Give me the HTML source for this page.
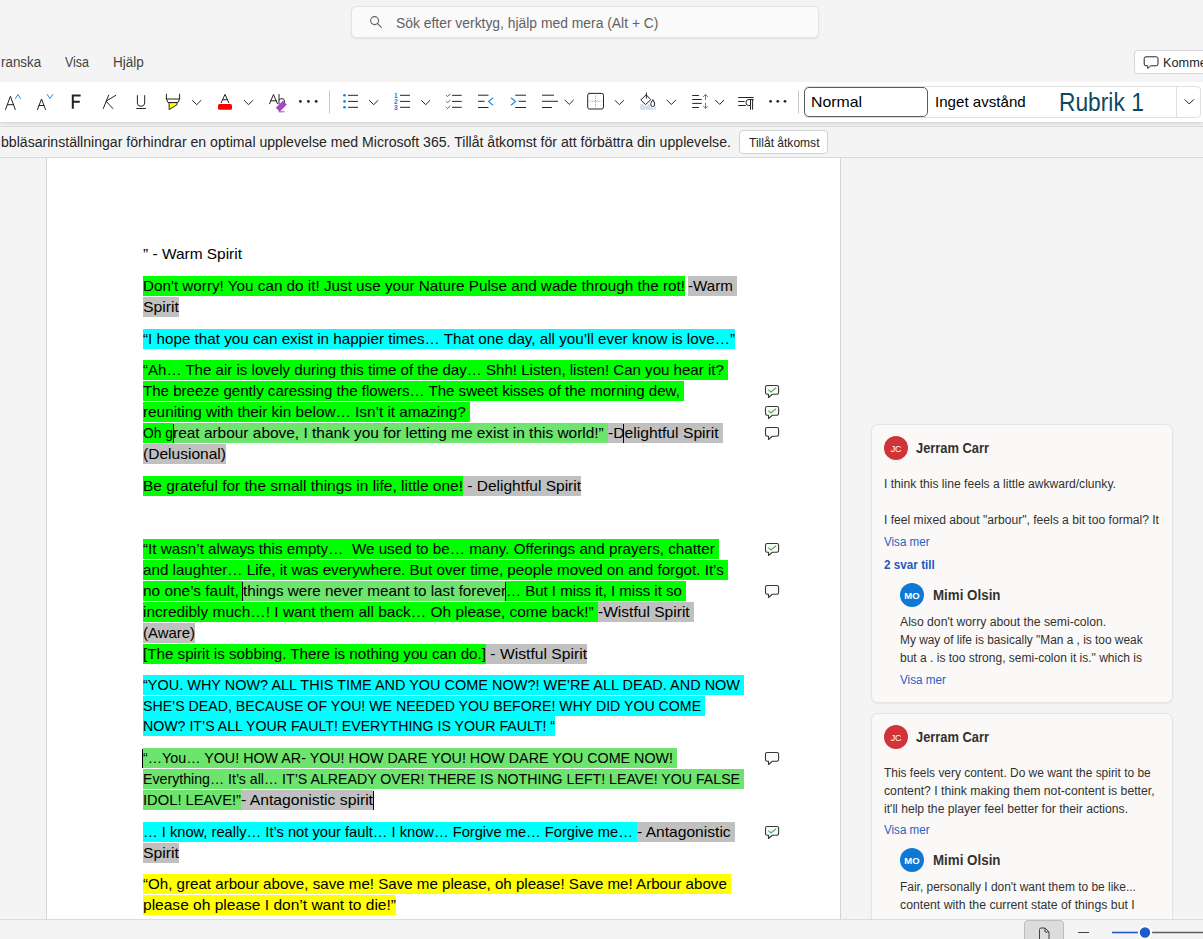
<!DOCTYPE html>
<html><head><meta charset="utf-8">
<style>
*{margin:0;padding:0;box-sizing:border-box}
html,body{width:1203px;height:939px;overflow:hidden;background:#f4f4f4;font-family:"Liberation Sans",sans-serif;color:#242424;position:relative}
.a{position:absolute;white-space:nowrap}
svg{position:absolute;overflow:visible}
#search{left:351px;top:6px;width:468px;height:32px;background:#fafafa;border:1px solid #e3e3e3;border-radius:5px;box-shadow:0 1px 2px rgba(0,0,0,.08)}
.menu{font-size:14px;color:#424242;top:53px}
#ribbon{left:0;top:82px;width:1203px;height:40px;background:#fff;box-shadow:0 2px 3px rgba(0,0,0,.12)}
#rline{left:0;top:126px;width:1203px;height:1px;background:#d9d9d9}
#infobar{left:0;top:127px;width:1203px;height:30px;background:#f4f4f4}
#iline{left:0;top:157px;width:1203px;height:1px;background:#d9d9d9}
#page{left:46px;top:158px;width:795px;height:761px;background:#fff;border-left:1px solid #d4d4d4;border-right:1px solid #d4d4d4}
#status{left:0;top:919px;width:1203px;height:20px;background:#f4f4f4;border-top:1px solid #dcdcdc}
.d{height:20px;line-height:20px;font-size:15px;color:#000}
.d span,.t{display:inline-block;transform-origin:0 0;white-space:pre}
.g{background:#00ff00}
.c{background:#00ffff}
.y{background:#ffff00}
.s{background:#c0c0c0}
.lg{background:#6de46d}
.card{background:#faf9f8;border:1px solid #e6e4e2;border-radius:7px;box-shadow:0 1px 2px rgba(0,0,0,.06)}
.cm{font-size:12px;color:#323130}
.name{font-size:14px;font-weight:bold;color:#323130}
.link{font-size:12px;color:#2b61c6}
.av{width:24px;height:24px;border-radius:12px;color:#fff;font-size:10px;text-align:center;line-height:24px}
</style></head><body>
<div class="a" id="search"></div>
<div class="a" id="ribbon"></div>

<!-- ribbon icons -->
<svg style="left:0;top:82px" width="1203" height="40" viewBox="0 82 1203 40" fill="none" stroke="#242424" stroke-width="1" stroke-linecap="round" stroke-linejoin="round">
 <!-- A^ -->
 <path d="M5.5 109.5 L10.4 96.3 L15.3 109.5 M7.3 104.7 H13.5"/>
 <path d="M15.5 98.5 L18 94.5 L20.5 98.5" stroke="#2b88d8"/>
 <!-- A v -->
 <path d="M37.5 109.5 L41.5 99 L45.5 109.5 M39 105.5 H44"/>
 <path d="M47.3 94.5 L50 98.5 L52.7 94.5" stroke="#2b88d8"/>
 <!-- F -->
 <path d="M72.8 108.8 V95.6 H80.6 M72.8 101.8 H79.8" stroke-width="2" stroke-linecap="butt" stroke-linejoin="miter"/>
 <!-- K italic -->
 <path d="M108.7 95.2 L103.3 108.5 M115.8 95.3 L106 101.2 L112.9 108.5"/>
 <!-- U -->
 <path d="M137.4 95.2 V103 Q137.4 106.3 141 106.3 Q144.7 106.3 144.7 103 V95.2 M136.3 108.5 H145.8" stroke-linecap="butt"/>
 <!-- highlighter -->
 <path d="M169.5 102.6 H177 V104.7 L169.5 109.5 Z" fill="#ffff00" stroke="#242424"/>
 <path d="M166.4 94.2 V99 H179.6 V94.2 M166.4 99 L168 102.5 H178 L179.6 99"/>
 <!-- chevrons -->
 <path d="M192.5 100.5 L196.7 104.7 L200.9 100.5 M244.3 100.5 L248.5 104.7 L252.7 100.5 M369.5 100.5 L373.7 104.7 L377.9 100.5 M421.5 100.5 L425.7 104.7 L429.9 100.5 M565 100.2 L569.2 104.4 L573.4 100.2 M615.2 100.5 L619.4 104.7 L623.6 100.5 M667 100.2 L671.3 104.5 L675.6 100.2 M715.5 100.2 L719.7 104.4 L723.9 100.2"/>
 <!-- font color A -->
 <path d="M221.2 102.8 L225 94.3 L228.8 102.8 M222.6 99.7 H227.4"/>
 <rect x="218" y="104" width="14" height="5.8" rx="1.5" fill="#ff0000" stroke="none"/>
 <!-- Ab eraser -->
 <path d="M269.5 103.8 L273.5 94.5 L277.5 103.8 M270.8 100.8 H276.2 M279 94.5 V103.8 M279 99.8 Q280 98.6 282 98.6 Q284.5 98.6 284.5 101.2 V103"/>
 <path d="M286.8 104.6 L282.9 100.7 L275.8 107.8 L279.7 111.7 Z" fill="#a347c4" stroke="none"/>
 <path d="M278.5 111.8 H284.5" stroke="#a347c4" stroke-linecap="butt"/>
 <!-- dots -->
 <g fill="#242424" stroke="none"><circle cx="300.4" cy="101.4" r="1.4"/><circle cx="308.4" cy="101.4" r="1.4"/><circle cx="316.2" cy="101.4" r="1.4"/>
 <circle cx="770.6" cy="101.3" r="1.4"/><circle cx="777.8" cy="101.3" r="1.4"/><circle cx="785" cy="101.3" r="1.4"/></g>
 <!-- separators -->
 <path d="M329.5 90.5 V113.5 M798.5 90.5 V113.5" stroke="#c8c8c8" stroke-linecap="butt"/>
 <!-- bullets -->
 <g fill="#1a7fd4" stroke="none"><circle cx="344.5" cy="95.3" r="1.3"/><circle cx="344.5" cy="101.4" r="1.3"/><circle cx="344.5" cy="107.3" r="1.3"/></g>
 <path d="M348 95.3 H358 M348 101.4 H358 M348 107.3 H358 M400 95.3 H410 M400 101.4 H410 M400 107.3 H410 M452 95.3 H461.7 M452 101.4 H461.7 M452 107.3 H461.7" stroke-linecap="butt"/>
 <!-- numbers -->
 <g fill="#1a7fd4" stroke="none" font-family="Liberation Sans" font-weight="bold" font-size="6.6px"><text x="393.9" y="97.8">1</text><text x="393.9" y="103.7">2</text><text x="393.9" y="109.7">3</text></g>
 <!-- checks -->
 <path d="M446.2 95.3 L447.6 96.6 L450 94 M446.2 101.4 L447.6 102.7 L450 100.1 M446.2 107.3 L447.6 108.6 L450 106" stroke="#1a7fd4"/>
 <!-- decrease indent -->
 <path d="M478 95.2 H488.5 M478 101.3 H484.6 M478 107.5 H488.5" stroke-linecap="butt"/>
 <path d="M492.8 98 L488.6 101.5 L492.8 105" stroke="#2b88d8" stroke-width="1.1"/>
 <!-- increase indent -->
 <path d="M515.2 95.2 H526 M518.7 101.3 H526 M515.2 107.5 H526" stroke-linecap="butt"/>
 <path d="M511.2 98 L515.4 101.5 L511.2 105" stroke="#2b88d8" stroke-width="1.1"/>
 <!-- align -->
 <path d="M542 95.2 H554 M542 101.3 H558 M542 107.5 H552" stroke-linecap="butt"/>
 <!-- borders -->
 <rect x="587.7" y="93.4" width="15.8" height="15.6" rx="1.8"/>
 <path d="M595.6 95.5 V107 M589.8 101.2 H601.4" stroke="#888" stroke-dasharray="1 1.2" stroke-linecap="butt"/>
 <!-- shading -->
 <rect x="640.1" y="104.1" width="15.8" height="5.7" rx="1.2" fill="#d3def1" stroke="none"/>
 <path d="M646.4 95 L650.8 99.7 L645.5 104.6 L641.1 100.3 Z" fill="#fff" stroke="#fff" stroke-width="3"/>
 <path d="M646.4 95 L650.8 99.7 L645.5 104.6 L641.1 100.3 Z M646.4 93 V98.1"/>
 <path d="M652.7 100 L650.8 103.4 Q650.2 106.6 652.7 106.6 Q655.2 106.6 654.6 103.4 Z" fill="#fff" stroke="#fff" stroke-width="2.6"/>
 <path d="M652.7 100 L650.8 103.4 Q650.2 106.6 652.7 106.6 Q655.2 106.6 654.6 103.4 Z"/>
 <!-- line spacing -->
 <path d="M692.2 95.5 H698.9 M692.2 99.5 H701.7 M692.2 103.4 H701.7 M692.2 107.5 H698.9" stroke-linecap="butt"/>
 <path d="M705.5 94.5 V99.7 M703.4 96.6 L705.5 94.5 L707.6 96.6 M705.5 103.2 V108.3 M703.4 106.2 L705.5 108.3 L707.6 106.2" stroke="#2b88d8"/>
 <!-- paragraph mark -->
 <path d="M738.2 97.5 H753.7 M738.2 101.5 H744.6 M738.2 105.5 H745.8 M748.3 99.5 H753.7 M750.5 99.5 V109.7 M752.6 99.5 V109.7" stroke-linecap="butt"/>
 <path d="M750.5 99.5 H748.8 Q745.9 99.5 745.9 102.5 Q745.9 105.5 748.8 105.5 H750.5" stroke-linecap="butt"/>
</svg>
<!-- style gallery -->
<div class="a" style="left:804px;top:86px;width:397px;height:32px;border:1px solid #e0e0e0;border-radius:4px;background:#fff"></div>
<div class="a" style="left:1176px;top:87px;width:1px;height:30px;background:#e0e0e0"></div>
<div class="a" style="left:804px;top:87px;width:124px;height:30px;border:1.5px solid #5c5c5c;border-radius:5px;background:#fff"></div>
<svg style="left:0;top:0" width="1203" height="120" fill="none" stroke="#242424" stroke-width="1" stroke-linecap="round" stroke-linejoin="round">
 <path d="M1184.8 99.6 L1189.2 104 L1193.6 99.6"/>
</svg>
<!-- Kommentarer button -->
<div class="a" style="left:1134px;top:50px;width:90px;height:24px;background:#fff;border:1px solid #d6d6d6;border-radius:4px"></div>
<svg style="left:0;top:0" width="1203" height="120" fill="none" stroke="#242424" stroke-width="1" stroke-linejoin="round">
 <path d="M1146 56.8 H1156.2 Q1158 56.8 1158 58.6 V64 Q1158 65.8 1156.2 65.8 H1150.8 L1147.8 68.4 V65.8 H1146 Q1144.2 65.8 1144.2 64 V58.6 Q1144.2 56.8 1146 56.8Z"/>
</svg>
<!-- search icon -->
<svg style="left:0;top:0" width="1203" height="40" fill="none" stroke="#616161" stroke-width="1.1" stroke-linecap="round">
 <circle cx="374.6" cy="20.6" r="4"/><path d="M377.6 23.6 L381.3 27.3"/>
</svg>
<div class="a" id="rline"></div>
<div class="a" id="infobar"></div>
<div class="a" style="left:739px;top:130px;width:89px;height:24px;background:#fff;border:1px solid #d1d1d1;border-radius:4px"></div>
<div class="a" id="iline"></div>
<div class="a" id="page"></div>
<div class="a d" style="left:143px;top:244px;width:99px"><span style="transform:scaleX(1.0301)">” - Warm Spirit</span></div>
<div class="a d g" style="left:143px;top:276px;width:542px"><span style="transform:scaleX(1.0165)">Don't worry! You can do it! Just use your Nature Pulse and wade through the rot!</span></div>
<div class="a d s" style="left:688px;top:276px;width:49px"><span style="transform:scaleX(1.0080)">-Warm </span></div>
<div class="a d s" style="left:143px;top:297px;width:36px"><span style="transform:scaleX(1.0530)">Spirit</span></div>
<div class="a d c" style="left:143px;top:329px;width:592px"><span style="transform:scaleX(1.0139)">“I hope that you can exist in happier times… That one day, all you’ll ever know is love…”</span></div>
<div class="a d g" style="left:143px;top:360px;width:585px"><span style="transform:scaleX(1.0043)">“Ah… The air is lovely during this time of the day… Shh! Listen, listen! Can you hear it? </span></div>
<div class="a d g" style="left:143px;top:381px;width:541px"><span style="transform:scaleX(1.0050)">The breeze gently caressing the flowers… The sweet kisses of the morning dew, </span></div>
<div class="a d g" style="left:143px;top:402px;width:327px"><span style="transform:scaleX(1.0214)">reuniting with their kin below… Isn’t it amazing? </span></div>
<div class="a d g" style="left:143px;top:423px;width:30px"><span style="transform:scaleX(0.9222)">Oh g</span></div>
<div class="a d lg" style="left:173px;top:423px;width:435px"><span style="transform:scaleX(1.0291)">reat arbour above, I thank you for letting me exist in this world!” </span></div>
<div class="a d s" style="left:608px;top:423px;width:115px"><span style="transform:scaleX(1.0450)">-Delightful Spirit </span></div>
<div class="a d s" style="left:143px;top:444px;width:83px"><span style="transform:scaleX(1.0369)">(Delusional)</span></div>
<div class="a d g" style="left:143px;top:476px;width:320px"><span style="transform:scaleX(1.0317)">Be grateful for the small things in life, little one!</span></div>
<div class="a d s" style="left:463px;top:476px;width:118px"><span style="transform:scaleX(1.0331)"> - Delightful Spirit</span></div>
<div class="a d g" style="left:143px;top:539px;width:576px"><span style="transform:scaleX(1.0145)">“It wasn’t always this empty…  We used to be… many. Offerings and prayers, chatter </span></div>
<div class="a d g" style="left:143px;top:560px;width:585px"><span style="transform:scaleX(1.0115)">and laughter… Life, it was everywhere. But over time, people moved on and forgot. It’s </span></div>
<div class="a d g" style="left:143px;top:581px;width:100px"><span style="transform:scaleX(1.0278)">no one’s fault, </span></div>
<div class="a d lg" style="left:243px;top:581px;width:263px"><span style="transform:scaleX(1.0143)">things were never meant to last forever</span></div>
<div class="a d g" style="left:506px;top:581px;width:180px"><span style="transform:scaleX(0.9998)">… But I miss it, I miss it so </span></div>
<div class="a d g" style="left:143px;top:602px;width:455px"><span style="transform:scaleX(1.0297)">incredibly much…! I want them all back… Oh please, come back!” </span></div>
<div class="a d s" style="left:598px;top:602px;width:96px"><span style="transform:scaleX(1.0377)">-Wistful Spirit </span></div>
<div class="a d s" style="left:143px;top:623px;width:52px"><span style="transform:scaleX(0.9952)">(Aware)</span></div>
<div class="a d g" style="left:143px;top:644px;width:343px"><span style="transform:scaleX(1.0115)">[The spirit is sobbing. There is nothing you can do.]</span></div>
<div class="a d s" style="left:486px;top:644px;width:101px"><span style="transform:scaleX(1.0446)"> - Wistful Spirit</span></div>
<div class="a d c" style="left:143px;top:675px;width:601px"><span style="transform:scaleX(0.9649)">“YOU. WHY NOW? ALL THIS TIME AND YOU COME NOW?! WE’RE ALL DEAD. AND NOW </span></div>
<div class="a d c" style="left:143px;top:696px;width:562px"><span style="transform:scaleX(0.9435)">SHE’S DEAD, BECAUSE OF YOU! WE NEEDED YOU BEFORE! WHY DID YOU COME </span></div>
<div class="a d c" style="left:143px;top:716px;width:412px"><span style="transform:scaleX(0.9439)">NOW? IT’S ALL YOUR FAULT! EVERYTHING IS YOUR FAULT! “</span></div>
<div class="a d lg" style="left:143px;top:748px;width:534px"><span style="transform:scaleX(0.9534)">“…You… YOU! HOW AR- YOU! HOW DARE YOU! HOW DARE YOU COME NOW! </span></div>
<div class="a d lg" style="left:143px;top:769px;width:601px"><span style="transform:scaleX(0.9445)">Everything… It’s all… IT’S ALREADY OVER! THERE IS NOTHING LEFT! LEAVE! YOU FALSE </span></div>
<div class="a d lg" style="left:143px;top:790px;width:98px"><span style="transform:scaleX(0.9823)">IDOL! LEAVE!”</span></div>
<div class="a d s" style="left:241px;top:790px;width:132px"><span style="transform:scaleX(1.0485)">- Antagonistic spirit</span></div>
<div class="a d c" style="left:143px;top:822px;width:494px"><span style="transform:scaleX(0.9784)">… I know, really… It’s not your fault… I know… Forgive me… Forgive me… </span></div>
<div class="a d s" style="left:637px;top:822px;width:98px"><span style="transform:scaleX(1.0401)">- Antagonistic </span></div>
<div class="a d s" style="left:143px;top:843px;width:36px"><span style="transform:scaleX(1.0530)">Spirit</span></div>
<div class="a d y" style="left:143px;top:874px;width:588px"><span style="transform:scaleX(1.0074)">“Oh, great arbour above, save me! Save me please, oh please! Save me! Arbour above </span></div>
<div class="a d y" style="left:143px;top:895px;width:253px"><span style="transform:scaleX(1.0354)">please oh please I don’t want to die!”</span></div>

<!-- margin comment icons -->
<svg style="left:0;top:0" width="1203" height="939" fill="none" stroke-linejoin="round">
 <defs>
  <path id="ci" d="M2.1 0.5 H11.9 Q13.6 0.5 13.6 2.2 V7.6 Q13.6 9.3 11.9 9.3 H7.4 L3.5 12.5 V9.3 H2.1 Q0.5 9.3 0.5 7.6 V2.2 Q0.5 0.5 2.1 0.5Z" fill="#fafafa" stroke="#383838" stroke-width="1.1"/>
  <g id="cc"><use href="#ci"/><path d="M3.6 4.8 L5.9 7 L10.8 3" stroke="#4cb05a" stroke-width="1.1" stroke-linecap="round"/></g>
 </defs>
 <use href="#cc" x="765" y="385"/>
 <use href="#cc" x="765" y="406"/>
 <use href="#ci" x="765" y="427"/>
 <use href="#cc" x="765" y="543"/>
 <use href="#ci" x="765" y="585"/>
 <use href="#ci" x="765" y="752"/>
 <use href="#cc" x="765" y="826"/>
</svg>
<!-- cursors -->
<div class="a" style="left:173px;top:424px;width:1px;height:19px;background:#000"></div>
<div class="a" style="left:623px;top:424px;width:1px;height:19px;background:#000"></div>
<div class="a" style="left:242px;top:582px;width:1px;height:19px;background:#000"></div>
<div class="a" style="left:505px;top:582px;width:1px;height:19px;background:#000"></div>
<div class="a" style="left:142px;top:749px;width:1px;height:19px;background:#000"></div>
<div class="a" style="left:373px;top:791px;width:1px;height:19px;background:#000"></div>
<!-- comment cards -->
<div class="a card" style="left:871px;top:424px;width:302px;height:278.5px"></div>
<div class="a card" style="left:871px;top:712.5px;width:302px;height:240px"></div>
<div class="a av" style="left:884px;top:436px;background:#d13438;font-size:9px;line-height:26px;letter-spacing:-0.3px">JC</div>
<div class="a av" style="left:900px;top:583px;background:#0f78d4;font-size:9.5px;font-weight:bold;line-height:26px">MO</div>
<div class="a av" style="left:884px;top:725px;background:#d13438;font-size:9px;line-height:26px;letter-spacing:-0.3px">JC</div>
<div class="a av" style="left:900px;top:848px;background:#0f78d4;font-size:9.5px;font-weight:bold;line-height:26px">MO</div>
<div class="a" style="left:396px;top:16.00px;font-size:14px;line-height:14px;font-weight:400;color:#616161"><span class="t" style="transform:scaleX(0.9908)">Sök efter verktyg, hjälp med mera (Alt + C)</span></div>
<div class="a" style="left:0.5px;top:54.60px;font-size:14px;line-height:14px;font-weight:400;color:#424242"><span class="t" style="transform:scaleX(0.9541)">ranska</span></div>
<div class="a" style="left:64.5px;top:54.60px;font-size:14px;line-height:14px;font-weight:400;color:#424242"><span class="t" style="transform:scaleX(0.8857)">Visa</span></div>
<div class="a" style="left:113px;top:54.60px;font-size:14px;line-height:14px;font-weight:400;color:#424242"><span class="t" style="transform:scaleX(0.9685)">Hjälp</span></div>
<div class="a" style="left:0.5px;top:135.00px;font-size:14px;line-height:14px;font-weight:400;color:#242424"><span class="t" style="transform:scaleX(1.0064)">bbläsarinställningar förhindrar en optimal upplevelse med Microsoft 365. Tillåt åtkomst för att förbättra din upplevelse.</span></div>
<div class="a" style="left:748.5px;top:136.75px;font-size:12.5px;line-height:12.5px;font-weight:400;color:#242424"><span class="t" style="transform:scaleX(0.9635)">Tillåt åtkomst</span></div>
<div class="a" style="left:810.7px;top:94.00px;font-size:15px;line-height:15px;font-weight:400;color:#000"><span class="t" style="transform:scaleX(1.0570)">Normal</span></div>
<div class="a" style="left:934.7px;top:94.00px;font-size:15px;line-height:15px;font-weight:400;color:#000"><span class="t" style="transform:scaleX(1.0069)">Inget avstånd</span></div>
<div class="a" style="left:1059px;top:89.50px;font-size:25px;line-height:25px;font-weight:400;color:#0f4761"><span class="t" style="transform:scaleX(0.9109)">Rubrik 1</span></div>
<div class="a" style="left:1163px;top:56.00px;font-size:13px;line-height:13px;font-weight:400;color:#242424"><span class="t" style="transform:scaleX(0.9778)">Kommentarer</span></div>
<div class="a" style="left:916px;top:441.00px;font-size:14px;line-height:14px;font-weight:700;color:#323130"><span class="t" style="transform:scaleX(0.9195)">Jerram Carr</span></div>
<div class="a" style="left:884.2px;top:478.00px;font-size:12px;line-height:12px;font-weight:400;color:#323130"><span class="t" style="transform:scaleX(1.0088)">I think this line feels a little awkward/clunky.</span></div>
<div class="a" style="left:884.2px;top:514.00px;font-size:12px;line-height:12px;font-weight:400;color:#323130"><span class="t" style="transform:scaleX(1.0085)">I feel mixed about "arbour", feels a bit too formal? It</span></div>
<div class="a" style="left:884.2px;top:536.00px;font-size:12px;line-height:12px;font-weight:400;color:#2a5fc2"><span class="t" style="transform:scaleX(0.9673)">Visa mer</span></div>
<div class="a" style="left:884.2px;top:559.20px;font-size:12px;line-height:12px;font-weight:700;color:#1f5bb8"><span class="t" style="transform:scaleX(0.9763)">2 svar till</span></div>
<div class="a" style="left:932.9px;top:587.80px;font-size:14px;line-height:14px;font-weight:700;color:#323130"><span class="t" style="transform:scaleX(0.9534)">Mimi Olsin</span></div>
<div class="a" style="left:900px;top:616.10px;font-size:12px;line-height:12px;font-weight:400;color:#323130"><span class="t" style="transform:scaleX(1.0155)">Also don't worry about the semi-colon.</span></div>
<div class="a" style="left:900px;top:634.20px;font-size:12px;line-height:12px;font-weight:400;color:#323130"><span class="t" style="transform:scaleX(0.9901)">My way of life is basically "Man a , is too weak</span></div>
<div class="a" style="left:900px;top:651.80px;font-size:12px;line-height:12px;font-weight:400;color:#323130"><span class="t" style="transform:scaleX(1.0009)">but a . is too strong, semi-colon it is." which is</span></div>
<div class="a" style="left:900px;top:674.00px;font-size:12px;line-height:12px;font-weight:400;color:#2a5fc2"><span class="t" style="transform:scaleX(0.9758)">Visa mer</span></div>
<div class="a" style="left:916px;top:730.40px;font-size:14px;line-height:14px;font-weight:700;color:#323130"><span class="t" style="transform:scaleX(0.9195)">Jerram Carr</span></div>
<div class="a" style="left:884.2px;top:767.20px;font-size:12px;line-height:12px;font-weight:400;color:#323130"><span class="t" style="transform:scaleX(0.9947)">This feels very content. Do we want the spirit to be</span></div>
<div class="a" style="left:884.2px;top:785.20px;font-size:12px;line-height:12px;font-weight:400;color:#323130"><span class="t" style="transform:scaleX(1.0193)">content? I think making them not-content is better,</span></div>
<div class="a" style="left:884.2px;top:802.70px;font-size:12px;line-height:12px;font-weight:400;color:#323130"><span class="t" style="transform:scaleX(1.0121)">it'll help the player feel better for their actions.</span></div>
<div class="a" style="left:884.2px;top:824.40px;font-size:12px;line-height:12px;font-weight:400;color:#2a5fc2"><span class="t" style="transform:scaleX(0.9673)">Visa mer</span></div>
<div class="a" style="left:932.9px;top:852.80px;font-size:14px;line-height:14px;font-weight:700;color:#323130"><span class="t" style="transform:scaleX(0.9534)">Mimi Olsin</span></div>
<div class="a" style="left:900px;top:881.10px;font-size:12px;line-height:12px;font-weight:400;color:#323130"><span class="t" style="transform:scaleX(0.9950)">Fair, personally I don't want them to be like...</span></div>
<div class="a" style="left:900px;top:898.70px;font-size:12px;line-height:12px;font-weight:400;color:#323130"><span class="t" style="transform:scaleX(1.0228)">content with the current state of things but I</span></div>
<div class="a" id="status"></div>
<div class="a" style="left:1024px;top:920px;width:40px;height:24px;background:#dcdcdc;border:1px solid #bdbdbd;border-radius:4px"></div>
<svg style="left:0;top:0" width="1203" height="939" fill="none" stroke="#424242" stroke-width="1" stroke-linejoin="round">
 <path d="M1039.5 939 V929.5 Q1039.5 928 1041 928 H1045 L1049 932 V939 M1045 928 V932 H1049"/>
 <path d="M1078 932.5 H1089"/>
 <path d="M1112 932.5 H1140" stroke="#1d5cc9" stroke-width="1.6"/>
 <path d="M1150 932.5 H1203" stroke="#5c5c5c" stroke-width="1.6"/>
 <circle cx="1145" cy="932.5" r="6.2" fill="#1d5cc9" stroke="#fff" stroke-width="2"/>
</svg>

</body></html>
